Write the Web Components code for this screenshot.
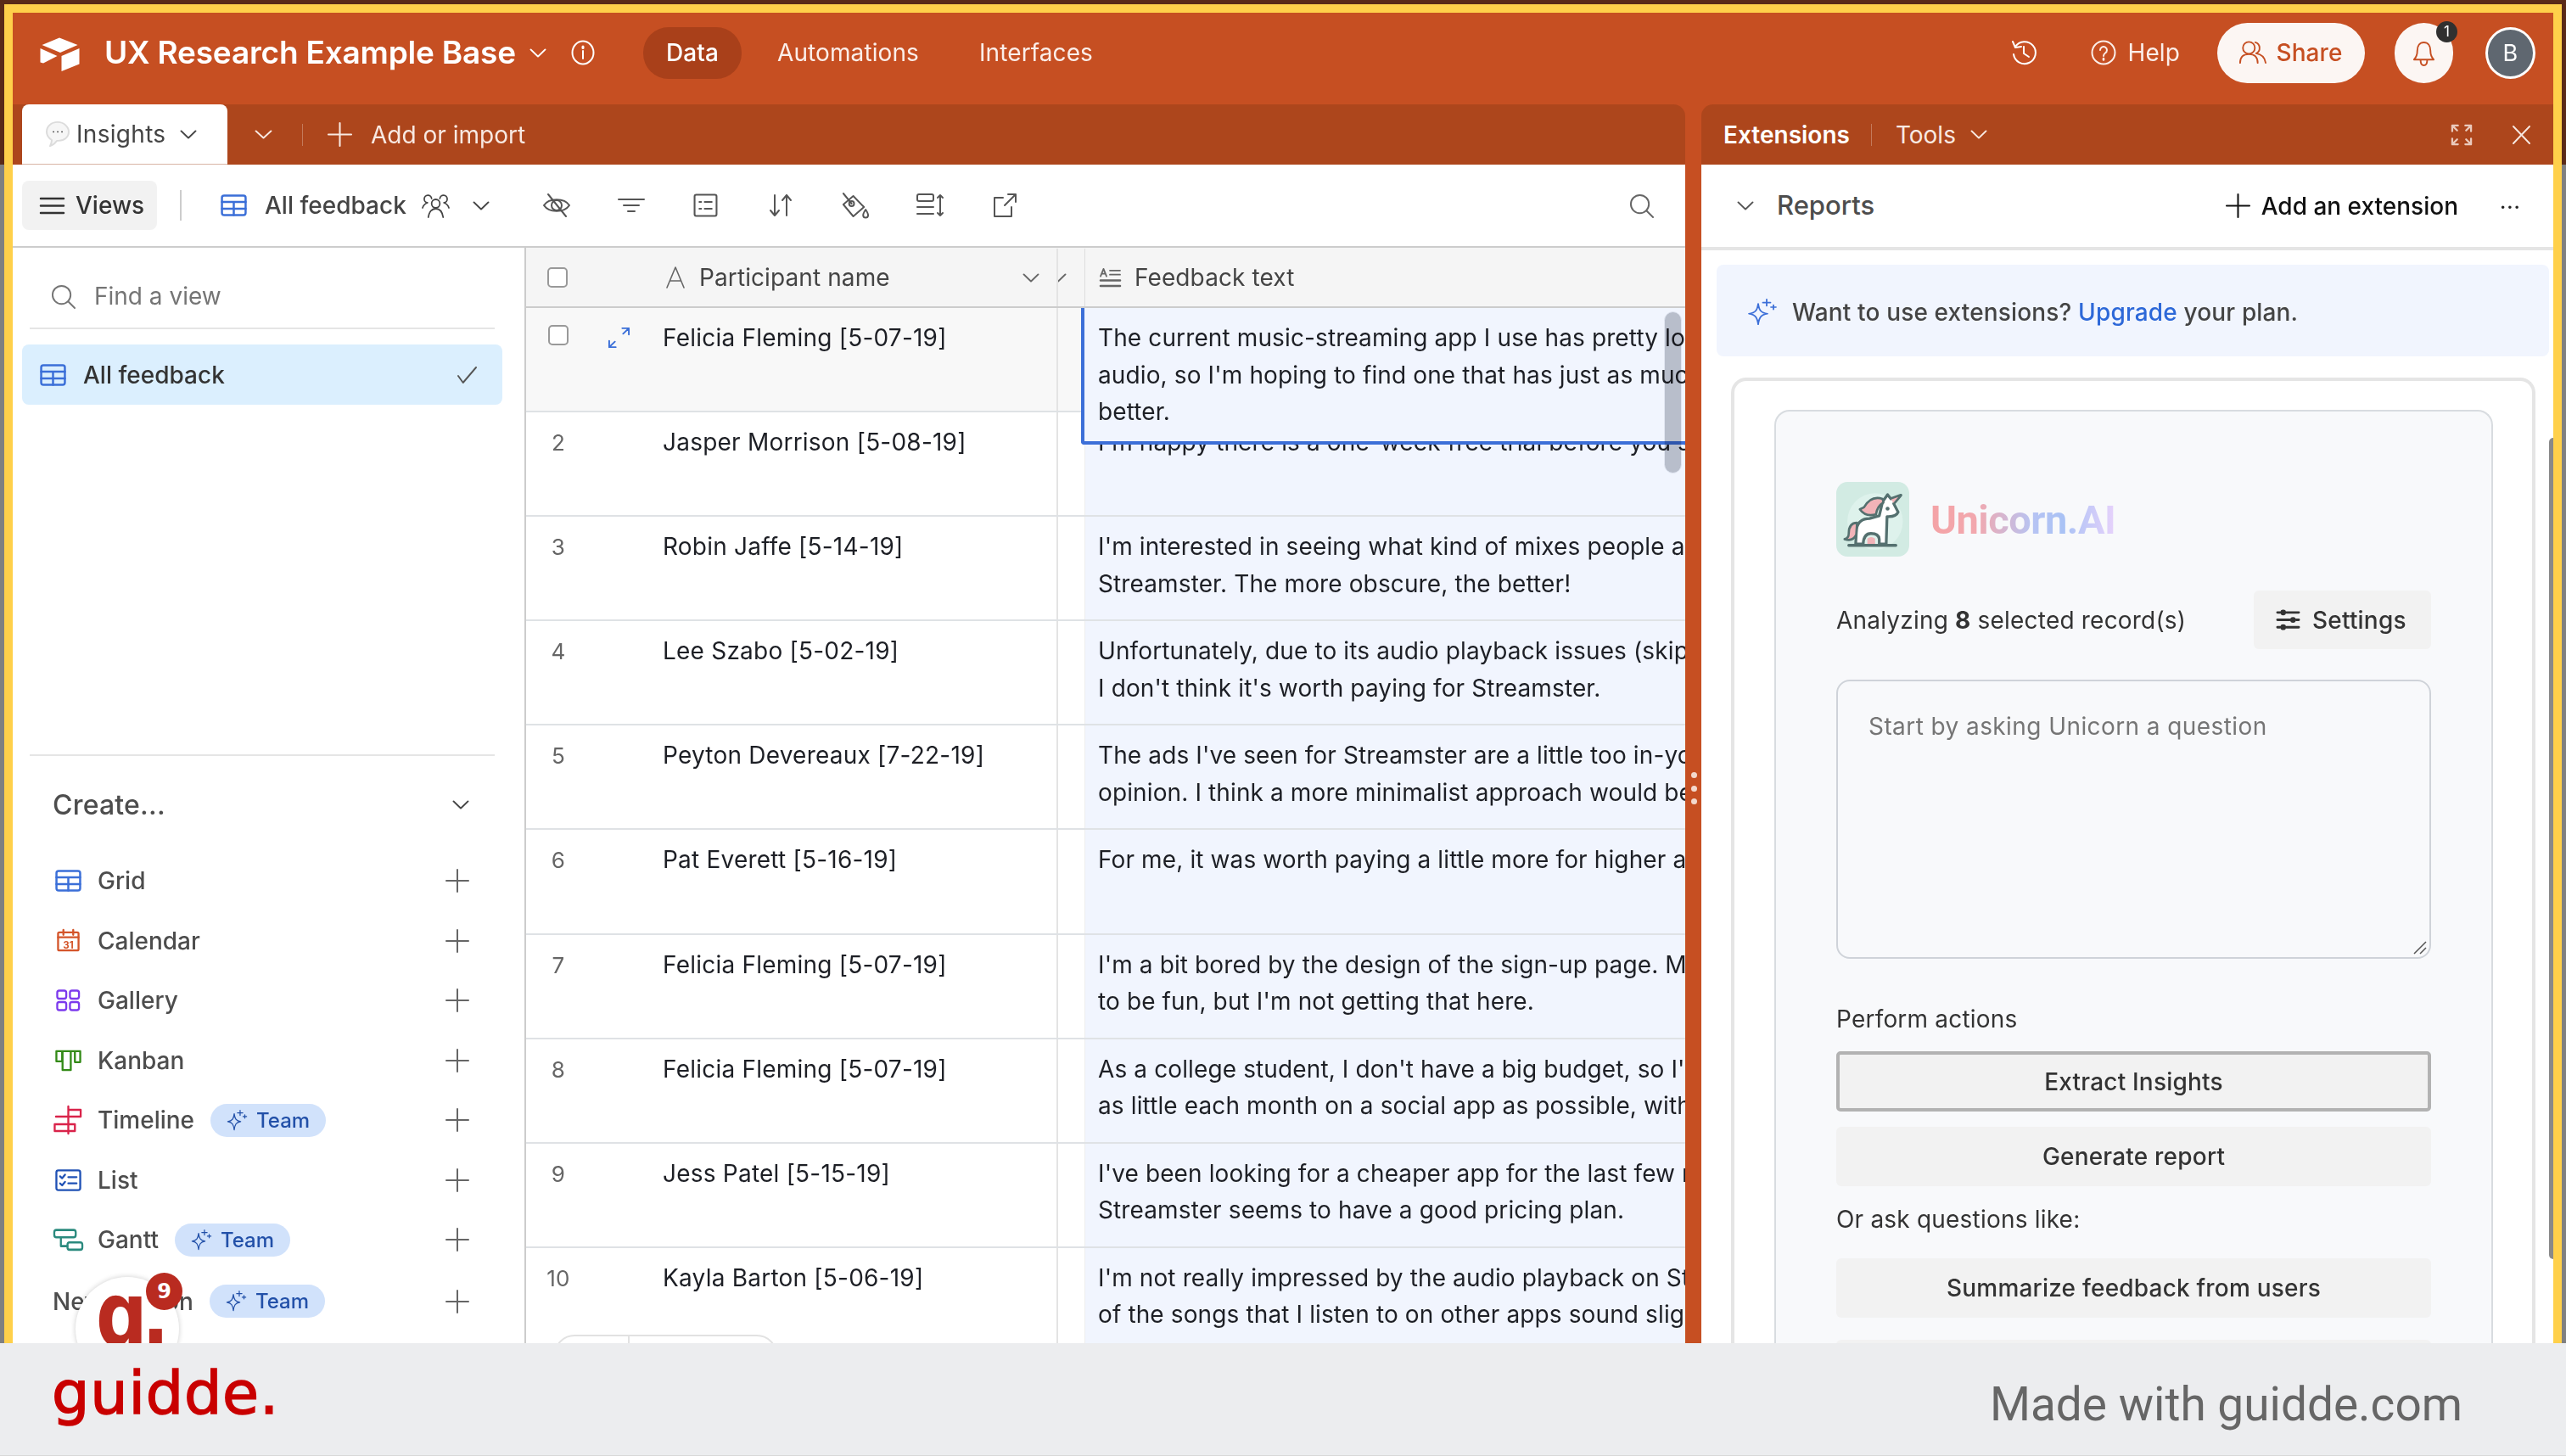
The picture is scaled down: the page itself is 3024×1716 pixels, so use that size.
<!DOCTYPE html>
<html lang="en">
<head>
<meta charset="utf-8">
<title>UX Research Example Base</title>
<style>
  html, body { margin: 0; padding: 0; background: #808080; }
  body { width: 3024px; height: 1716px; overflow: hidden; font-family: Inter, "Liberation Sans", sans-serif; }
</style>
</head>
<body>
<ux-page></ux-page>

<script>
// icon drawings, viewBox first and then the inner svg
const ICONS = {
  logo: ["0 0 47 39", `<g fill="currentColor" stroke="none"><path d="M23 1.500 44.500 10 24 19 2.500 10Z"/><path d="M25.500 23 46.500 14V32.500L25.500 41Z"/><path d="M.5 14 20.500 23 4 31.500.5 30.500Z"/></g>`],
  chevron: ["0 0 20 12", `<path d="M1.500 1.500 10 10.500 18.500 1.500"/>`],
  info: ["0 0 28 30", `<ellipse cx="14" cy="15" rx="12.500" ry="13.500"/><path d="M14 13v9"/><path d="M14 8v1.500" stroke-width="3"/>`],
  history: ["0 0 30 30", `<path d="M5 8a13 13 0 1 1-2 9"/><path d="M2 2 5 9l7-1"/><path d="M15 8v8l6 4"/>`],
  help: ["0 0 30 30", `<circle cx="15" cy="15" r="13.500"/><path d="M11 12a4 4 0 1 1 6 3.500c-1.500 1-2 2-2 3.500"/><path d="M15 22v1.500" stroke-width="2.600"/>`],
  share: ["0 0 34 30", `<circle cx="12" cy="9" r="7.500"/><path d="M1 28c0-7 4-11 11-11s11 4 11 11"/><path d="M20 2a7.500 7.500 0 0 1 1 14c6 1 11 5 12 12"/>`],
  bell: ["0 0 28 32", `<path d="M2 24c3-3 4-6 4-11 0-6 3-10 8-10s8 4 8 10c0 5 1 8 4 11Z"/><path d="M10 25c0 4 2 6 4 6s4-2 4-6"/>`],
  plus: ["0 0 26 26", `<path d="M13 0v26M0 13h26"/>`],
  bubble: ["0 0 28 34", `<path d="M14 1C6 1 1 7 1 14c0 5 3 9 6 11 0 3-1 6-2 8 3-1 6-4 8-7h2c7 0 12-5 12-12S21 1 14 1Z" fill="#f6f6f6" stroke="#dcdcdc"/><path d="M9 14h.1M14 14h.1M19 14h.1" stroke="#555" stroke-width="2"/>`],
  menu: ["0 0 28 22", `<path d="M0 2h28M0 11h28M0 20h28"/>`],
  grid: ["0 0 30 26", `<rect x="1.500" y="1.500" width="27" height="23" rx="2.500"/><path d="M1.500 9h27M1.500 17h27M15 9v15.500"/>`],
  people: ["0 0 34 30", `<circle cx="17" cy="13" r="5"/><path d="M8 29c1-6 4-10 9-10s8 4 9 10"/><path d="M12 7a4.500 4.500 0 1 0-5 5c-3 1-5 3-6 6"/><path d="M22 7a4.500 4.500 0 1 1 5 5c3 1 5 3 6 6"/>`],
  eyeoff: ["0 0 34 28", `<path d="M2 14C8 5 26 5 32 14 26 23 8 23 2 14Z"/><circle cx="17" cy="14" r="6"/><path d="M7 1 28 27"/>`],
  filter: ["0 0 30 18", `<path d="M0 2h30M6 9h18M11 16h8"/>`],
  fields: ["0 0 28 28", `<rect x="1.500" y="1.500" width="25" height="25" rx="2"/><path d="M7 10h2M7 18h2M13 10h8M13 18h8"/>`],
  sort: ["0 0 26 28", `<path d="M6 2v24M1 20l5 6 5-6M20 26V2M15 8l5-6 5 6"/>`],
  paint: ["0 0 36 30", `<path d="M4 14 16 4 29 17 16 28Z"/><circle cx="14" cy="13" r="3"/><path d="M4 1 14 13"/><path d="M31 20c2 3 3 5 3 6.500a3 3 0 0 1-6 0c0-1.500 1-3.500 3-6.500Z"/>`],
  rowh: ["0 0 32 28", `<rect x="1" y="1" width="19" height="8" rx="2"/><path d="M1 16h19M1 24h19M28 2v24M25 5l3-3 3 3M25 23l3 3 3-3"/>`],
  export: ["0 0 28 30", `<path d="M12 6H2v22h20V17M14 15 27 2M18 2h9v9"/>`],
  search: ["0 0 30 30", `<circle cx="13" cy="13" r="11"/><path d="M21 21l8 8"/>`],
  check: ["0 0 24 20", `<path d="M1 11l6 8L23 1"/>`],
  star: ["0 0 36 38", `<path d="M13 7c1 9 3 13 11 14-8 1-10 6-11 15-1-9-3-14-11-15 8-1 10-5 11-14Z"/><path d="M23 1v9M18.500 5.500h9M31 9v6M28 12h6"/>`],
  calendar: ["0 0 28 28", `<rect x="1.500" y="4" width="25" height="22" rx="1.500"/><path d="M1.500 10h25M8 1v6M20 1v6"/><text x="14" y="23.500" font-size="12" font-weight="700" text-anchor="middle" stroke="none" fill="currentColor" font-family="Inter, sans-serif">31</text>`],
  gallery: ["0 0 30 26", `<rect x="1.500" y="1.500" width="11" height="9.500" rx="2.500"/><rect x="17" y="1.500" width="11" height="9.500" rx="2.500"/><rect x="1.500" y="15" width="11" height="9.500" rx="2.500"/><rect x="17" y="15" width="11" height="9.500" rx="2.500"/>`],
  kanban: ["0 0 32 28", `<path d="M1.500 2h29v14H24V2M1.500 2v13h7V2M9 2v24h10V2"/>`],
  timeline: ["0 0 36 34", `<path d="M18 1v32M18 5h15v8H18M3 13h15M3 22H1.500v8H18M18 22h8v8h-8M3 22h15"/>`],
  list: ["0 0 32 28", `<rect x="1.500" y="1.500" width="29" height="25" rx="2.500"/><path d="M6 9l2.500 2.500L12 7M6 18l2.500 2.500L12 16M16 10h10M16 18h10"/>`],
  gantt: ["0 0 36 24", `<rect x="1" y="1.500" width="26" height="8" rx="2.500"/><rect x="17" y="15" width="18" height="8" rx="2.500"/><path d="M9 9.500V19h8"/>`],
  expand: ["0 0 28 28", `<path d="M9 19 2 26M2 18v8h8M19 9l7-7M18 2h8v8"/>`],
  expand4: ["0 0 27 27", `<path d="M2 9V2h7M2 2l6 6M25 9V2h-7M25 2l-6 6M2 18v7h7M2 25l6-6M25 18v7h-7M25 25l-6-6"/>`],
  close: ["0 0 22 22", `<path d="M1 1l20 20M21 1 1 21"/>`],
  atype: ["0 0 22 26", `<path d="M1 25 11 1l10 24M5 17h12"/>`],
  longtext: ["0 0 25 26", `<path d="M1 11 4.500 2 8 11M2.300 8h4.400M12 4h12M12 9h12" stroke-width="1.800"/><path d="M1 16h23M1 23h23" stroke-width="2.600"/>`],
  sliders: ["0 0 28 28", `<path d="M1 5h3M12 5h15M1 14h15M24 14h3M1 23h3M12 23h15" stroke-width="3"/><circle cx="8" cy="5" r="2.500" fill="currentColor"/><circle cx="20" cy="14" r="2.500" fill="currentColor"/><circle cx="8" cy="23" r="2.500" fill="currentColor"/>`],
  unicorn: ["25 25 263 265", `<rect x="25" y="25" width="263" height="265" rx="40" fill="#d2ebe3" stroke="none"/>
    <circle cx="165" cy="165" r="100" fill="#def2ec" stroke="none"/>
    <path d="M205 245H180V228Q178 208 150 208 124 208 122 245H95L98 192Q105 155 145 155L180 145 192 95 210 70 222 85 258 72 232 102 248 132Q240 150 208 148Z" fill="#fff" stroke="#54706f" stroke-width="10" stroke-linejoin="round"/>
    <path d="M192 85Q150 72 125 115L110 122Q130 150 168 140 172 112 195 98Z" fill="#f2b3b8" stroke="#54706f" stroke-width="8" stroke-linejoin="round"/>
    <path d="M100 170Q70 170 70 208 70 225 55 228 85 238 97 212Z" fill="#f2b3b8" stroke="#54706f" stroke-width="8" stroke-linejoin="round"/>
    <path d="M137 245V226Q150 215 165 226V245Z" fill="#f2b3b8" stroke="none"/>
    <path d="M70 250H240" stroke="#54706f" stroke-width="10"/>
    <circle cx="210" cy="120" r="7" fill="#54706f" stroke="none"/>
    <path d="M222 85 258 72 232 102" fill="#f2b3b8" stroke="#54706f" stroke-width="6"/>`],
};

class UxIcon extends HTMLElement {
  connectedCallback() {
    const def = ICONS[this.getAttribute("name")];
    const w = this.getAttribute("w") || 28;
    const h = this.getAttribute("h") || w;
    const sw = this.getAttribute("sw") || 2;
    this.attachShadow({ mode: "open" }).innerHTML = `
      <style>:host { display: inline-flex; flex: none; line-height: 0; } svg { display: block; overflow: visible; }</style>
      <svg width="${w}" height="${h}" viewBox="${def[0]}" fill="none" stroke="currentColor" stroke-width="${sw}" preserveAspectRatio="none" stroke-linecap="round" stroke-linejoin="round">${def[1]}</svg>`;
  }
}
customElements.define("ux-icon", UxIcon);

class UxTopbar extends HTMLElement {
  connectedCallback() {
    this.attachShadow({ mode: "open" }).innerHTML = `
      <style>
        :host { display: flex; align-items: center; height: 108px; flex: none; padding: 0 21px 14px 32px; box-sizing: border-box; color: #fff; font-size: 28px; letter-spacing: .1px; background: #c64f22; }
        .title { font-size: 37px; font-weight: 600; margin: -2px 0 0 29px; letter-spacing: -.2px; white-space: nowrap; }
        .nav { display: flex; align-items: center; height: 61px; padding: 0 27px; border-radius: 30px; margin-left: 15px; color: #fbeee9; white-space: nowrap; }
        .nav.on { background: #a9401a; margin-left: 57px; font-weight: 500; color: #fff; }
        .right { margin-left: auto; display: flex; align-items: center; }
        .help { display: flex; align-items: center; gap: 14px; margin-left: 64px; color: #fbeee9; }
        .share { display: flex; align-items: center; justify-content: center; gap: 11px; width: 174px; height: 71px; margin-left: 44px; border-radius: 36px; background: #fcf6f3; color: #c64f22; font-weight: 500; }
        .bell { position: relative; display: flex; align-items: center; justify-content: center; width: 69px; height: 71px; margin-left: 35px; border-radius: 36px; background: #fcf6f3; color: #c64f22; }
        .badge { position: absolute; right: -5px; top: -2px; width: 25px; height: 25px; border-radius: 50%; background: #303030; color: #fff; font-size: 17px; display: flex; align-items: center; justify-content: center; }
        .avatar { display: flex; align-items: center; justify-content: center; width: 59px; height: 61px; box-sizing: border-box; margin-left: 38px; border: 3px solid #fff; border-radius: 50%; background: #5f6770; color: #fff; font-size: 27px; }
      </style>
      <ux-icon name="logo" w="47" h="39"></ux-icon>
      <span class="title">UX Research Example Base</span>
      <ux-icon name="chevron" w="20" h="11" style="margin-left:16px"></ux-icon>
      <ux-icon name="info" w="28" h="30" style="margin-left:29px"></ux-icon>
      <span class="nav on">Data</span>
      <span class="nav">Automations</span>
      <span class="nav" style="margin-left:17px">Interfaces</span>
      <div class="right">
        <ux-icon name="history" w="30" h="30"></ux-icon>
        <div class="help"><ux-icon name="help" w="30" h="30"></ux-icon>Help</div>
        <div class="share"><ux-icon name="share" w="32" h="28"></ux-icon>Share</div>
        <div class="bell"><ux-icon name="bell" w="27" h="31"></ux-icon><span class="badge">1</span></div>
        <div class="avatar">B</div>
      </div>`;
  }
}
customElements.define("ux-topbar", UxTopbar);

class UxTabbar extends HTMLElement {
  connectedCallback() {
    this.attachShadow({ mode: "open" }).innerHTML = `
      <style>
        :host { display: flex; align-items: center; height: 71px; flex: none; background: #ad461c; border-radius: 0 14px 0 0; color: #f8e9e2; font-size: 28px; box-sizing: border-box; padding-left: 11px; }
        .tab { display: flex; align-items: center; width: 242px; height: 71px; box-sizing: border-box; padding-left: 28px; background: #fff; color: #444; border-radius: 8px 8px 0 0; border-bottom: 1px solid #d9b5a5; letter-spacing: .3px; }
        .sep { width: 1px; height: 26px; background: #c47a5b; }
      </style>
      <div class="tab">
        <ux-icon name="bubble" w="28" h="30"></ux-icon>
        <span style="margin-left:8px">Insights</span>
        <ux-icon name="chevron" w="20" h="11" style="margin-left:17px"></ux-icon>
      </div>
      <ux-icon name="chevron" w="21" h="11" style="margin-left:32px"></ux-icon>
      <span class="sep" style="margin-left:35px"></span>
      <ux-icon name="plus" w="27" h="27" style="margin-left:30px"></ux-icon>
      <span style="margin-left:23px">Add or import</span>`;
  }
}
customElements.define("ux-tabbar", UxTabbar);

class UxToolbar extends HTMLElement {
  connectedCallback() {
    this.attachShadow({ mode: "open" }).innerHTML = `
      <style>
        :host { display: flex; align-items: center; height: 98px; flex: none; box-sizing: border-box; border-bottom: 2px solid #ccc; padding-left: 11px; background: #fff; color: #333; font-size: 28px; font-weight: 500; }
        .views { display: flex; align-items: center; gap: 14px; width: 159px; height: 58px; box-sizing: border-box; padding-left: 22px; border-radius: 8px; background: #f2f2f2; }
        .sep { width: 2px; height: 36px; background: #ccc; margin-left: 27px; }
        .tool { display: flex; justify-content: center; align-items: center; width: 88px; height: 30px; color: #555; }
        .tools { display: flex; align-items: center; margin-left: 35px; }
      </style>
      <div class="views"><ux-icon name="menu" w="27" h="21" sw="2.600"></ux-icon>Views</div>
      <span class="sep"></span>
      <ux-icon name="grid" w="31" h="26" sw="2.400" style="margin-left:46px;color:#3b6fd8"></ux-icon>
      <span style="margin-left:21px;color:#444">All feedback</span>
      <ux-icon name="people" w="33" h="30" sw="1.800" style="margin-left:18px;color:#444"></ux-icon>
      <ux-icon name="chevron" w="20" h="11" style="margin-left:27px;color:#444"></ux-icon>
      <div class="tools">
        <span class="tool"><ux-icon name="eyeoff" w="34" h="28"></ux-icon></span>
        <span class="tool"><ux-icon name="filter" w="30" h="18"></ux-icon></span>
        <span class="tool"><ux-icon name="fields" w="29" h="28"></ux-icon></span>
        <span class="tool"><ux-icon name="sort" w="26" h="28"></ux-icon></span>
        <span class="tool"><ux-icon name="paint" w="35" h="30"></ux-icon></span>
        <span class="tool"><ux-icon name="rowh" w="32" h="28"></ux-icon></span>
        <span class="tool"><ux-icon name="export" w="28" h="30"></ux-icon></span>
      </div>
      <ux-icon name="search" w="29" h="29" style="margin-left:auto;margin-right:37px;color:#666"></ux-icon>`;
  }
}
customElements.define("ux-toolbar", UxToolbar);

class UxTeamPill extends HTMLElement {
  connectedCallback() {
    this.attachShadow({ mode: "open" }).innerHTML = `
      <style>
        :host { display: inline-flex; align-items: center; gap: 10px; height: 39px; box-sizing: border-box; padding: 0 19px; border-radius: 20px; background: #d1e2fb; color: #2250a8; font-size: 24px; font-weight: 500; }
      </style>
      <ux-icon name="star" w="25" h="25" sw="1.800"></ux-icon>Team`;
  }
}
customElements.define("ux-team-pill", UxTeamPill);

class UxCreateRow extends HTMLElement {
  connectedCallback() {
    const icon = this.getAttribute("icon");
    const iw = this.getAttribute("iw") || 31;
    const ih = this.getAttribute("ih") || 26;
    const team = this.hasAttribute("team");
    this.attachShadow({ mode: "open" }).innerHTML = `
      <style>
        :host { display: flex; align-items: center; height: 70.5px; padding-left: 47px; color: #4d4d4d; font-size: 28px; font-weight: 500; }
        .ic { display: flex; justify-content: center; width: 36px; margin-right: 17px; }
        ux-team-pill { margin-left: 19px; }
        .add { margin-left: auto; margin-right: 66px; color: #666; }
      </style>
      ${icon ? `<span class="ic"><ux-icon name="${icon}" w="${iw}" h="${ih}" sw="2.400" style="color:${this.getAttribute("tint")}"></ux-icon></span>` : ""}
      <slot></slot>
      ${team ? "<ux-team-pill></ux-team-pill>" : ""}
      <ux-icon class="add" name="plus" w="26" h="26"></ux-icon>`;
  }
}
customElements.define("ux-create-row", UxCreateRow);

class UxSidebar extends HTMLElement {
  connectedCallback() {
    this.attachShadow({ mode: "open" }).innerHTML = `
      <style>
        :host { display: block; flex: none; width: 605px; box-sizing: border-box; border-right: 2px solid #ccc; background: #fff; overflow: hidden; }
        .top { height: 599px; box-sizing: border-box; margin: 0 35px 0 20px; border-bottom: 2px solid #e5e5e5; }
        .find { display: flex; align-items: center; gap: 22px; height: 96px; box-sizing: border-box; padding: 20px 0 0 25px; border-bottom: 2px solid #e5e5e5; color: #757575; font-size: 28px; }
        .sel { display: flex; align-items: center; height: 71px; margin: 18px -9px 0 -9px; padding: 0 30px 0 21px; border-radius: 8px; background: #dbeffe; color: #333; font-size: 28px; font-weight: 500; }
        .create { display: flex; align-items: center; height: 112px; box-sizing: border-box; padding: 2px 65px 0 47px; color: #4d4d4d; font-size: 32px; font-weight: 500; letter-spacing: .2px; }
      </style>
      <div class="top">
        <div class="find"><ux-icon name="search" w="29" h="29"></ux-icon>Find a view</div>
        <div class="sel">
          <ux-icon name="grid" w="31" h="26" sw="2.400" style="color:#3b6fd8"></ux-icon>
          <span style="margin-left:20px">All feedback</span>
          <ux-icon name="check" w="23" h="20" style="margin-left:auto;color:#555"></ux-icon>
        </div>
      </div>
      <div class="create">Create...<ux-icon name="chevron" w="20" h="11" style="margin-left:auto;color:#444"></ux-icon></div>
      <ux-create-row icon="grid" tint="#3b6fd8">Grid</ux-create-row>
      <ux-create-row icon="calendar" tint="#d4552a" iw="27" ih="27">Calendar</ux-create-row>
      <ux-create-row icon="gallery" tint="#7c3aed" iw="29" ih="26">Gallery</ux-create-row>
      <ux-create-row icon="kanban" tint="#338a17" iw="31" ih="26">Kanban</ux-create-row>
      <ux-create-row icon="timeline" tint="#d9234a" iw="35" ih="34" team>Timeline</ux-create-row>
      <ux-create-row icon="list" tint="#1f51b5" iw="31" ih="26">List</ux-create-row>
      <ux-create-row icon="gantt" tint="#2b8a7e" iw="35" ih="26" team>Gantt</ux-create-row>
      <ux-create-row team style="margin-top:2px">New section</ux-create-row>`;
  }
}
customElements.define("ux-sidebar", UxSidebar);

class UxRow extends HTMLElement {
  connectedCallback() {
    const first = this.hasAttribute("first");
    this.attachShadow({ mode: "open" }).innerHTML = `
      <style>
        :host { display: grid; grid-template-columns: 625px 2px 32px 1fr; height: 123.100px; box-sizing: border-box; border-bottom: 2px solid #dfe2e5; color: #1d1f25; font-size: 28px; line-height: 43.500px; letter-spacing: .22px; }
        .left { display: flex; background: ${first ? "#f8f8f8" : "#fff"}; padding-top: 14px; white-space: nowrap; }
        .num { width: 76px; text-align: center; color: #666; font-size: 26px; flex: none; }
        .box { display: block; width: 24px; height: 24px; box-sizing: border-box; margin: 6px auto 0; border: 2px solid #999; border-radius: 5px; background: #fff; }
        .gutter { width: 85px; flex: none; color: #3b6fd8; padding: 8px 0 0 20px; box-sizing: border-box; line-height: 0; }
        .bar { background: #e4e4e4; }
        .gap { background: ${first ? "#f8f8f8" : "#fff"}; border-right: 1px solid #eee; }
        .text { background: #f1f5fe; padding: 14px 0 0 15px; overflow: hidden; white-space: nowrap; letter-spacing: .12px; }
      </style>
      <div class="left">
        <span class="num">${first ? '<span class="box"></span>' : this.getAttribute("num")}</span>
        <span class="gutter">${first ? '<ux-icon name="expand" w="27" h="26"></ux-icon>' : ""}</span>
        <slot name="name"></slot>
      </div>
      <div class="bar"></div>
      <div class="gap"></div>
      <div class="text"><slot></slot></div>`;
  }
}
customElements.define("ux-row", UxRow);

class UxGrid extends HTMLElement {
  connectedCallback() {
    this.attachShadow({ mode: "open" }).innerHTML = `
      <style>
        :host { display: block; flex: 1; min-width: 0; background: #fff; overflow: hidden; font-size: 28px; letter-spacing: .1px; }
        .head { display: grid; grid-template-columns: 625px 2px 32px 1fr; height: 71px; box-sizing: border-box; border-bottom: 2px solid #ccc; background: #f5f5f5; color: #444; padding-top: 1px; }
        .head > div { display: flex; align-items: center; }
        .box { width: 24px; height: 24px; box-sizing: border-box; margin-left: 25px; border: 2px solid #999; border-radius: 5px; background: #fff; }
        .bar { background: #e4e4e4; }
        .gap { border-right: 1px solid #ddd; color: #777; overflow: hidden; }
        .body { position: relative; height: 1400px; }
        .cell { position: absolute; left: 654px; top: 0; right: 0; height: 161px; box-sizing: border-box; padding: 14px 0 0 16px; background: #f1f5fe; border-left: 4px solid #3c6fd8; border-bottom: 4px solid #3c6fd8; border-bottom-left-radius: 4px; color: #1d1f25; line-height: 43.500px; letter-spacing: .12px; white-space: nowrap; overflow: hidden; }
        .thumb { position: absolute; left: 1341px; top: 4px; width: 21px; height: 191px; box-sizing: border-box; border: 1px solid #eef0f3; border-radius: 11px; background: #c3c6cc; mix-blend-mode: multiply; }
        .adder { position: absolute; left: 33px; top: 1210px; width: 263px; height: 60px; box-sizing: border-box; border: 2px solid #e2e2e2; border-radius: 24px; background: #fff; }
        .adder i { display: block; width: 2px; height: 60px; margin-left: 85px; background: #e2e2e2; }
      </style>
      <div class="head">
        <div>
          <span class="box"></span>
          <ux-icon name="atype" w="22" h="26" sw="1.600" style="margin-left:116px;color:#666"></ux-icon>
          <span style="margin-left:17px">Participant name</span>
          <ux-icon name="chevron" w="20" h="11" style="margin-left:auto;margin-right:20px;color:#666"></ux-icon>
        </div>
        <div class="bar"></div>
        <div class="gap"><ux-icon name="chevron" w="20" h="11" style="color:#666;margin-left:-10px"></ux-icon></div>
        <div>
          <ux-icon name="longtext" w="25" h="25" style="margin-left:17px;color:#666"></ux-icon>
          <span style="margin-left:16px">Feedback text</span>
        </div>
      </div>
      <div class="body">
        <ux-row first><span slot="name">Felicia Fleming [5-07-19]</span></ux-row>
        <ux-row num="2"><span slot="name">Jasper Morrison [5-08-19]</span><div>I'm happy there is a one-week free trial before you subscribe</div></ux-row>
        <ux-row num="3"><span slot="name">Robin Jaffe [5-14-19]</span><div>I'm interested in seeing what kind of mixes people are making on</div><div>Streamster. The more obscure, the better!</div></ux-row>
        <ux-row num="4"><span slot="name">Lee Szabo [5-02-19]</span><div>Unfortunately, due to its audio playback issues (skipping),</div><div>I don't think it's worth paying for Streamster.</div></ux-row>
        <ux-row num="5"><span slot="name">Peyton Devereaux [7-22-19]</span><div>The ads I've seen for Streamster are a little too in-your-face</div><div>opinion. I think a more minimalist approach would be better</div></ux-row>
        <ux-row num="6"><span slot="name">Pat Everett [5-16-19]</span><div>For me, it was worth paying a little more for higher audio quality</div></ux-row>
        <ux-row num="7"><span slot="name">Felicia Fleming [5-07-19]</span><div>I'm a bit bored by the design of the sign-up page. Music is supposed</div><div>to be fun, but I'm not getting that here.</div></ux-row>
        <ux-row num="8"><span slot="name">Felicia Fleming [5-07-19]</span><div>As a college student, I don't have a big budget, so I'd like to pay</div><div>as little each month on a social app as possible, without ads</div></ux-row>
        <ux-row num="9"><span slot="name">Jess Patel [5-15-19]</span><div>I've been looking for a cheaper app for the last few months</div><div>Streamster seems to have a good pricing plan.</div></ux-row>
        <ux-row num="10"><span slot="name">Kayla Barton [5-06-19]</span><div>I'm not really impressed by the audio playback on Streamster</div><div>of the songs that I listen to on other apps sound slightly better</div></ux-row>
        <div class="cell">
          <div>The current music-streaming app I use has pretty low quality</div>
          <div>audio, so I'm hoping to find one that has just as much music</div>
          <div>better.</div>
        </div>
        <div class="thumb"></div>
        <div class="adder"><i></i></div>
      </div>`;
  }
}
customElements.define("ux-grid", UxGrid);

class UxAction extends HTMLElement {
  connectedCallback() {
    this.attachShadow({ mode: "open" }).innerHTML = `
      <style>
        :host { display: flex; align-items: center; justify-content: center; height: 70px; border-radius: 6px; background: #f2f2f2; color: #333; font-size: 28px; font-weight: 500; }
        :host([focused]) { height: 71px; box-sizing: border-box; border: 4px solid #b2b2b2; border-radius: 5px; }
      </style>
      <slot></slot>`;
  }
}
customElements.define("ux-action", UxAction);

class UxUnicorn extends HTMLElement {
  connectedCallback() {
    this.attachShadow({ mode: "open" }).innerHTML = `
      <style>
        :host { display: block; box-sizing: border-box; width: 847px; margin: 34px 0 0 47px; padding: 83px 71px 0; border: 2px solid #d8dce0; border-bottom: 0; border-radius: 18px 18px 0 0; background: #f8f9fb; color: #333; font-size: 28px; letter-spacing: .2px; height: 1200px; }
        .brand { display: flex; align-items: center; gap: 25px; }
        .name { font-family: Roboto, Inter, sans-serif; font-size: 47px; font-weight: 700; letter-spacing: -.5px; background: linear-gradient(90deg, #f4a3a6 0%, #f2a8ae 25%, #b7c4f3 55%, #a9c2f5 72%, #e7d2fb 100%); -webkit-background-clip: text; background-clip: text; color: transparent; }
        .status { display: flex; align-items: center; justify-content: space-between; margin-top: 40px; }
        .settings { display: flex; align-items: center; gap: 15px; width: 209px; height: 69px; box-sizing: border-box; padding-left: 27px; border-radius: 6px; background: #f2f2f2; font-weight: 500; }
        .ask { position: relative; height: 329px; box-sizing: border-box; margin-top: 36px; padding: 35px 36px 0; border: 2px solid #cfd3d9; border-radius: 16px; line-height: 36px; color: #757575; letter-spacing: .42px; }
        .ask svg { position: absolute; right: 3px; bottom: 3px; }
        .label { height: 34px; line-height: 34px; }
      </style>
      <div class="brand"><ux-icon name="unicorn" w="86" h="88"></ux-icon><span class="name">Unicorn.AI</span></div>
      <div class="status"><span>Analyzing <b>8</b> selected record(s)</span><div class="settings"><ux-icon name="sliders" w="27" h="27"></ux-icon>Settings</div></div>
      <div class="ask">Start by asking Unicorn a question
        <svg width="16" height="16" viewBox="0 0 16 16" stroke="#555" stroke-width="1.500"><path d="M1 15 15 1M8 15l7-7"/></svg>
      </div>
      <div class="label" style="margin-top:54px">Perform actions</div>
      <ux-action focused style="margin-top:21px">Extract Insights</ux-action>
      <ux-action style="margin-top:18px">Generate report</ux-action>
      <div class="label" style="margin-top:22px">Or ask questions like:</div>
      <ux-action style="margin-top:29px">Summarize feedback from users</ux-action>
      <ux-action style="margin-top:26px"></ux-action>`;
  }
}
customElements.define("ux-unicorn", UxUnicorn);

class UxExtensions extends HTMLElement {
  connectedCallback() {
    this.attachShadow({ mode: "open" }).innerHTML = `
      <style>
        :host { position: relative; display: flex; flex-direction: column; flex: none; width: 1004px; margin-left: 19px; font-size: 28px; color: #333; overflow: hidden; }
        .tabs { display: flex; align-items: center; height: 71px; flex: none; padding: 0 27px 0 26px; border-radius: 14px 0 0 0; background: #ad461c; color: #f8e9e2; }
        .sep { width: 1px; height: 26px; background: #c47a5b; margin: 0 28px 0 25px; }
        .reports { display: flex; align-items: center; height: 101px; box-sizing: border-box; flex: none; padding: 0 39px 0 42px; background: #fff; border-bottom: 4px solid #e5e5e5; font-weight: 500; }
        .body { flex: 1; min-height: 0; background: #fff; overflow: hidden; }
        .banner { display: flex; align-items: center; gap: 17px; width: 981px; height: 108px; box-sizing: border-box; margin: 17px 0 0 18px; padding: 3px 0 0 36px; border-radius: 8px; background: #f1f5fe; color: #444; font-weight: 500; letter-spacing: .15px; }
        .banner a { color: #2d68d8; text-decoration: none; }
        .outer { width: 948px; height: 1300px; box-sizing: border-box; margin: 25px 0 0 35px; border: 4px solid #e5e5e5; border-bottom: 0; border-radius: 18px 18px 0 0; }
        .scroll { position: absolute; right: 0; top: 393px; width: 5px; height: 968px; background: #898989; border-radius: 6px 0 0 6px; }
      </style>
      <div class="tabs">
        <span style="font-weight:600;color:#fff">Extensions</span>
        <span class="sep"></span>
        <span>Tools</span>
        <ux-icon name="chevron" w="20" h="11" style="margin-left:17px"></ux-icon>
        <ux-icon name="expand4" w="26" h="26" sw="2.400" style="margin-left:auto;color:#eac9bb"></ux-icon>
        <ux-icon name="close" w="21" h="22" style="margin-left:47px"></ux-icon>
      </div>
      <div class="reports">
        <ux-icon name="chevron" w="20" h="11" style="color:#555"></ux-icon>
        <span style="margin-left:27px;margin-top:-3px;font-size:31px;color:#4d4d4d">Reports</span>
        <ux-icon name="plus" w="27" h="27" style="margin-left:auto;color:#111"></ux-icon>
        <span style="margin-left:14px;color:#111">Add an extension</span>
        <span style="margin-left:49px;width:24px;color:#222;letter-spacing:1px;font-size:24px;line-height:20px;margin-top:-10px">...</span>
      </div>
      <div class="body">
        <div class="banner">
          <ux-icon name="star" w="36" h="32" sw="1.800" style="color:#3c6fd8"></ux-icon>
          <span>Want to use extensions? <a>Upgrade</a> your plan.</span>
        </div>
        <div class="outer"><ux-unicorn></ux-unicorn></div>
      </div>
      <div class="scroll"></div>`;
  }
}
customElements.define("ux-extensions", UxExtensions);

class UxFooter extends HTMLElement {
  connectedCallback() {
    this.attachShadow({ mode: "open" }).innerHTML = `
      <style>
        :host { position: relative; z-index: 2; display: flex; align-items: center; justify-content: space-between; height: 133px; flex: none; box-sizing: border-box; padding: 0 122px 0 61px; background: #ecedef; border-bottom: 1px solid #d8d8d8; }
        .brand { font-family: "DejaVu Sans", sans-serif; font-size: 70px; color: #c90000; -webkit-text-stroke: 1.500px #c90000; margin-top: -14px; letter-spacing: .8px; }
        .made { font-family: Roboto, sans-serif; font-size: 55px; color: #666; margin-top: 12px; }
      </style>
      <span class="brand">guidde.</span>
      <span class="made">Made with guidde.com</span>`;
  }
}
customElements.define("ux-footer", UxFooter);

class UxBubble extends HTMLElement {
  connectedCallback() {
    this.attachShadow({ mode: "open" }).innerHTML = `
      <style>
        :host { position: absolute; left: 89px; top: 1505px; width: 122px; height: 122px; border-radius: 50%; background: #fff; box-shadow: 0 0 6px rgba(0,0,0,.2); z-index: 1; }
        .mark { position: absolute; left: 24px; top: -17px; font-family: "DejaVu Sans", sans-serif; font-size: 106px; line-height: 124px; font-weight: 700; letter-spacing: -8px; color: #b92b20; transform: scaleX(.8); transform-origin: 0 0; white-space: nowrap; }
        .count { position: absolute; left: 83px; top: -5px; width: 43px; height: 44px; border-radius: 50%; background: #b92b20; color: #fff; font-family: "DejaVu Sans", sans-serif; font-size: 24px; font-weight: 700; display: flex; align-items: center; justify-content: center; }
      </style>
      <span class="mark">ɑ.</span>
      <span class="count">9</span>`;
  }
}
customElements.define("ux-bubble", UxBubble);

class UxPage extends HTMLElement {
  connectedCallback() {
    this.attachShadow({ mode: "open" }).innerHTML = `
      <style>
        :host { position: relative; display: flex; flex-direction: column; width: 3024px; height: 1716px; overflow: hidden; color: #333; }
        .shell { height: 1583px; flex: none; box-sizing: border-box; padding: 5px 5px 0; background: linear-gradient(#5a2a18 0 194px, #808080 194px); }
        .frame { display: flex; flex-direction: column; height: 1578px; box-sizing: border-box; border: 10px solid #ffd04a; border-bottom: 0; background: #c64f22; overflow: hidden; }
        .work { display: flex; flex: 1; min-height: 0; position: relative; }
        .base { display: flex; flex-direction: column; width: 1971px; flex: none; min-height: 0; overflow: hidden; }
        .split { display: flex; flex: 1; min-height: 0; }
        .grip { position: absolute; left: 1978px; top: 787px; display: flex; flex-direction: column; gap: 8.500px; }
        .grip i { width: 7px; height: 7px; border-radius: 50%; background: #f3d8cc; }
      </style>
      <div class="shell">
        <div class="frame">
          <ux-topbar></ux-topbar>
          <div class="work">
            <div class="base">
              <ux-tabbar></ux-tabbar>
              <ux-toolbar></ux-toolbar>
              <div class="split"><ux-sidebar></ux-sidebar><ux-grid></ux-grid></div>
            </div>
            <ux-extensions></ux-extensions>
            <div class="grip"><i></i><i></i><i></i></div>
          </div>
        </div>
      </div>
      <ux-bubble></ux-bubble>
      <ux-footer></ux-footer>`;
  }
}
customElements.define("ux-page", UxPage);
</script>
</body>
</html>
